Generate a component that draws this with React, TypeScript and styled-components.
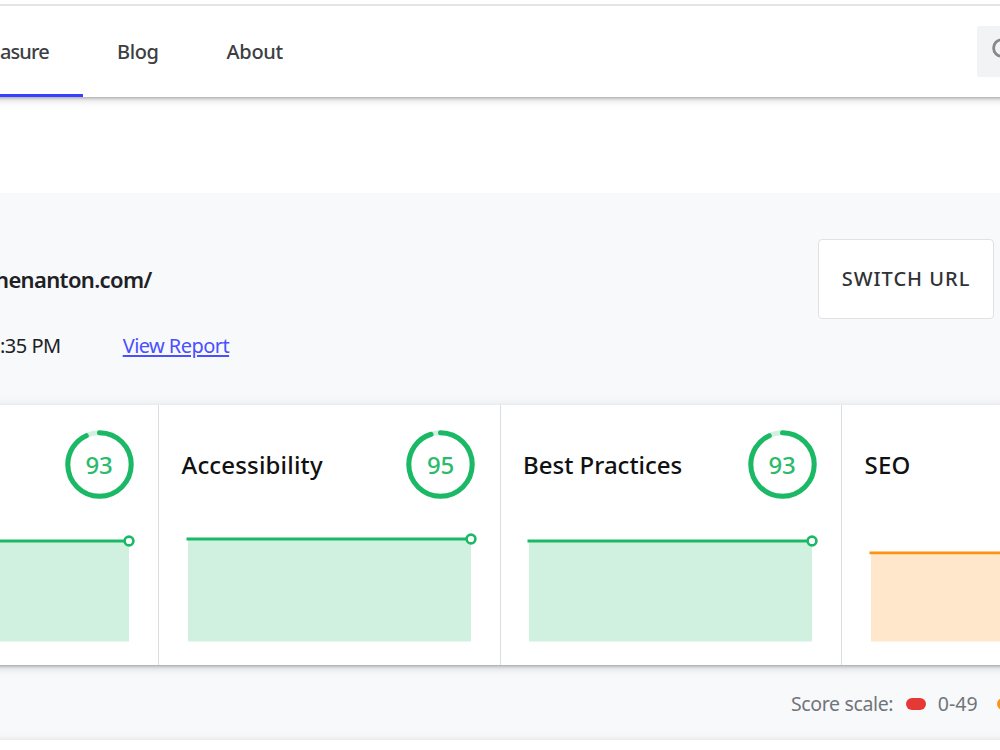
import React from "react";
import styled, { createGlobalStyle } from "styled-components";

const GlobalStyle = createGlobalStyle`
  * { box-sizing: border-box; }
  html, body { margin: 0; padding: 0; background: #fff; }
  body { font-family: "Noto Sans", "Open Sans", sans-serif; overflow: hidden; }
`;

const elevation = `
  0 2px 3px -1px rgba(0, 0, 0, 0.26),
  0 3px 7px rgba(0, 0, 0, 0.1),
  0 1px 12px rgba(0, 0, 0, 0.09)
`;

const Page = styled.div`
  width: 1000px;
  height: 750px;
  overflow: hidden;
  display: flex;
  flex-direction: column;
  background: #fff;
`;

const Header = styled.header`
  flex: none;
  display: flex;
  justify-content: space-between;
  height: 93px;
  margin: 4px -20px 0;
  padding: 0 20px;
  border-top: 2px solid #e3e3e8;
  box-shadow: ${elevation};
  clip-path: inset(0 0 -24px 0);
`;

const Nav = styled.nav`
  display: flex;
`;

const Tab = styled.a<{ $width: number; $active?: boolean; $tracking: number }>`
  width: ${(p) => p.$width}px;
  padding: 32px 0 0 ${(p) => (p.$active ? 0 : 34.5)}px;
  border-bottom: 3px solid ${(p) => (p.$active ? "#3740ff" : "transparent")};
  color: #3c4043;
  font-size: 20px;
  font-weight: 500;
  line-height: 28px;
  letter-spacing: ${(p) => p.$tracking}px;
  white-space: nowrap;
`;

const SearchBox = styled.div`
  width: 23px;
  height: 51px;
  margin-top: 20px;
  padding: 10px 0 0 14px;
  overflow: hidden;
  border-radius: 2px 0 0 2px;
  background: #f1f3f4;
`;

const Main = styled.main`
  flex: none;
  display: flex;
  flex-direction: column;
  height: 547px;
  margin-top: 96px;
  background: #f8f9fb;
`;

const Summary = styled.section`
  display: flex;
  justify-content: space-between;
  height: 212px;
  padding: 46px 6px 0 0;
`;

const Details = styled.div`
  padding-top: 24px;
`;

const SiteUrl = styled.h1`
  margin: 0 0 0 -5px;
  color: #202124;
  font-size: 22px;
  font-weight: 600;
  line-height: 32px;
  letter-spacing: -0.65px;
`;

const Meta = styled.div`
  display: flex;
  gap: 62px;
  margin-top: 36px;
  color: #202124;
  font-size: 20px;
  line-height: 30px;
  letter-spacing: -0.5px;
`;

const ReportLink = styled.a`
  color: #4a50ff;
  letter-spacing: -0.56px;
  text-decoration: underline;
  text-decoration-thickness: 1.5px;
  text-underline-offset: 2px;
`;

const SwitchButton = styled.button`
  width: 176px;
  height: 80px;
  padding: 0;
  border: 1.5px solid #dfe1e5;
  border-radius: 4px;
  background: #fff;
  color: #303336;
  font: 500 20px/28px "Noto Sans", sans-serif;
  letter-spacing: 1px;
  white-space: nowrap;
`;

const Scores = styled.section`
  flex: none;
  display: grid;
  grid-template-columns: repeat(4, 341.5px);
  height: 260px;
  margin: 0 -40px 0 -182.5px;
  background: #fff;
  box-shadow: ${elevation};
`;

const Card = styled.article`
  border-right: 1px solid #dcdde1;
`;

const CardHead = styled.div`
  display: flex;
  justify-content: space-between;
  align-items: center;
  height: 70px;
  margin: 24px 24.5px 0 22.5px;
`;

const CardTitle = styled.h2<{ $tracking: number }>`
  margin: 0;
  padding-top: 1px;
  color: #111;
  font-size: 24px;
  font-weight: 500;
  line-height: 34px;
  letter-spacing: ${(p) => p.$tracking}px;
  white-space: nowrap;
`;

const Gauge = styled.div`
  display: grid;
  place-items: center;
  width: 69px;
  height: 69px;
  > * { grid-area: 1 / 1; }
`;

const GaugeValue = styled.span`
  padding-top: 1px;
  color: #2cbb6c;
  font-size: 24px;
  font-weight: 500;
  line-height: 34px;
  letter-spacing: -0.3px;
`;

const Chart = styled.svg`
  display: block;
  margin: 22.2px 0 0 19.5px;
`;

const Legend = styled.footer`
  display: flex;
  align-items: center;
  height: 75px;
  padding: 1px 0 0 791px;
  color: #70757a;
  font-size: 19.5px;
  letter-spacing: -0.36px;
  white-space: nowrap;
`;

const Range = styled.span`
  margin-left: 12px;
  letter-spacing: 0.1px;
`;

const Pill = styled.i<{ $color: string; $gap: number }>`
  flex: none;
  width: 20px;
  height: 12px;
  margin: 2px 0 0 ${(p) => p.$gap}px;
  border-radius: 6px;
  background: ${(p) => p.$color};
`;

const NextPanel = styled.div`
  flex: none;
  height: 30px;
  margin: 0 -20px;
  background: #fff;
  box-shadow: ${elevation};
`;

const RADIUS = 31.7;
const LENGTH = 2 * Math.PI * RADIUS;

type Score = { title: string; score: number; lineY: number; color: string; fill: string; tracking: number };

const scores: Score[] = [
  { title: "", score: 93, lineY: 20, color: "#1bb966", fill: "#d1f1e0", tracking: 0 },
  { title: "Accessibility", score: 95, lineY: 18, color: "#1bb966", fill: "#d1f1e0", tracking: 0.17 },
  { title: "Best Practices", score: 93, lineY: 20, color: "#1bb966", fill: "#d1f1e0", tracking: 0 },
  { title: "SEO", score: 80, lineY: 31.8, color: "#fb9412", fill: "#ffe7cc", tracking: 0.2 },
];

function ScoreCard({ title, score, lineY, color, fill, tracking }: Score) {
  return (
    <Card>
      <CardHead>
        <CardTitle $tracking={tracking}>{title}</CardTitle>
        {score >= 90 && (
          <Gauge>
            <svg width="69" height="69" viewBox="0 0 69 69" fill="none" strokeWidth="5">
              <circle cx="34.5" cy="34.5" r={RADIUS} stroke={fill} />
              <circle
                cx="34.5"
                cy="34.5"
                r={RADIUS}
                stroke={color}
                strokeLinecap="round"
                strokeDasharray={`${(LENGTH * score) / 100} ${LENGTH}`}
                transform="rotate(-90 34.5 34.5)"
              />
            </svg>
            <GaugeValue>{score}</GaugeValue>
          </Gauge>
        )}
      </CardHead>
      <Chart width="300" height="122" viewBox="0 0 300 122">
        <rect x="9" y={lineY} width="283" height={120.5 - lineY} fill={fill} />
        <path d={`M7.5 ${lineY}H292`} stroke={color} strokeWidth="2.8" />
        <circle cx="292" cy={lineY} r="4.4" fill="#fff" stroke={color} strokeWidth="2.6" />
      </Chart>
    </Card>
  );
}

export default function App() {
  return (
    <Page>
      <GlobalStyle />
      <Header>
        <Nav>
          <Tab $width={82.5} $tracking={-0.9} $active>asure</Tab>
          <Tab $width={109.5} $tracking={-0.4}>Blog</Tab>
          <Tab $width={130} $tracking={-0.3}>About</Tab>
        </Nav>
        <SearchBox>
          <svg width="28" height="28" viewBox="0 0 28 28" fill="none" stroke="#868889" strokeWidth="2.8">
            <circle cx="11" cy="12" r="8.4" />
            <path d="M17 18l8 8" />
          </svg>
        </SearchBox>
      </Header>
      <Main>
        <Summary>
          <Details>
            <SiteUrl>henanton.com/</SiteUrl>
            <Meta>
              <span>:35 PM</span>
              <ReportLink>View Report</ReportLink>
            </Meta>
          </Details>
          <SwitchButton>SWITCH URL</SwitchButton>
        </Summary>
        <Scores>
          {scores.map((item, index) => (
            <ScoreCard key={index} {...item} />
          ))}
        </Scores>
        <Legend>
          <span>Score scale:</span>
          <Pill $color="#e53935" $gap={12.5} />
          <Range>0-49</Range>
          <Pill $color="#fb9412" $gap={19} />
        </Legend>
      </Main>
      <NextPanel />
    </Page>
  );
}
